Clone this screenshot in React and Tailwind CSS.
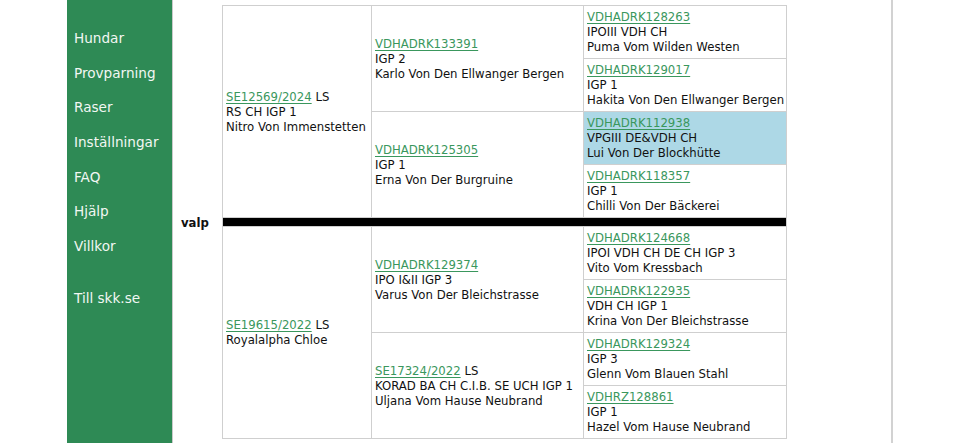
const nav = ['Hundar', 'Provparning', 'Raser', 'Inställningar', 'FAQ', 'Hjälp', 'Villkor']

const sire = {
  dog: { reg: 'SE12569/2024', extra: 'LS', title: 'RS CH IGP 1', name: 'Nitro Von Immenstetten' },
  parents: [
    {
      dog: { reg: 'VDHADRK133391', title: 'IGP 2', name: 'Karlo Von Den Ellwanger Bergen' },
      parents: [
        { reg: 'VDHADRK128263', title: 'IPOIII VDH CH', name: 'Puma Vom Wilden Westen' },
        { reg: 'VDHADRK129017', title: 'IGP 1', name: 'Hakita Von Den Ellwanger Bergen' },
      ],
    },
    {
      dog: { reg: 'VDHADRK125305', title: 'IGP 1', name: 'Erna Von Der Burgruine' },
      parents: [
        { reg: 'VDHADRK112938', title: 'VPGIII DE&VDH CH', name: 'Lui Von Der Blockhütte', hl: true },
        { reg: 'VDHADRK118357', title: 'IGP 1', name: 'Chilli Von Der Bäckerei' },
      ],
    },
  ],
}

const dam = {
  dog: { reg: 'SE19615/2022', extra: 'LS', name: 'Royalalpha Chloe' },
  parents: [
    {
      dog: { reg: 'VDHADRK129374', title: 'IPO I&II IGP 3', name: 'Varus Von Der Bleichstrasse' },
      parents: [
        { reg: 'VDHADRK124668', title: 'IPOI VDH CH DE CH IGP 3', name: 'Vito Vom Kressbach' },
        { reg: 'VDHADRK122935', title: 'VDH CH IGP 1', name: 'Krina Von Der Bleichstrasse' },
      ],
    },
    {
      dog: { reg: 'SE17324/2022', extra: 'LS', title: 'KORAD BA CH C.I.B. SE UCH IGP 1', name: 'Uljana Vom Hause Neubrand' },
      parents: [
        { reg: 'VDHADRK129324', title: 'IGP 3', name: 'Glenn Vom Blauen Stahl' },
        { reg: 'VDHRZ128861', title: 'IGP 1', name: 'Hazel Vom Hause Neubrand' },
      ],
    },
  ],
}

function Dog({ d }) {
  return (
    <>
      <a href="#" className="text-[#3a975d] underline underline-offset-2">
        {d.reg}
      </a>
      {d.extra && <span> {d.extra}</span>}
      {d.title && <div>{d.title}</div>}
      <div>{d.name}</div>
    </>
  )
}

const cell = 'border border-[#cfcfcf] pl-[3px] pr-0 pt-[4px] pb-[3px] align-middle whitespace-nowrap'

function Half({ p }) {
  const rows = []
  p.parents.forEach((par, i) => {
    par.parents.forEach((gp, j) => {
      rows.push(
        <tr key={`${i}-${j}`}>
          {i === 0 && j === 0 && (
            <td rowSpan={4} className={`${cell} w-[149px]`}>
              <Dog d={p.dog} />
            </td>
          )}
          {j === 0 && (
            <td rowSpan={2} className={`${cell} w-[212px]`}>
              <Dog d={par.dog} />
            </td>
          )}
          <td className={`${cell} w-[203px] h-[53px] ${gp.hl ? 'bg-[#add8e6]' : ''}`}>
            <Dog d={gp} />
          </td>
        </tr>
      )
    })
  })
  return rows
}

export default function App() {
  return (
    <div className="flex h-[443px] overflow-hidden bg-white text-[11.7px] leading-[15px] text-[#111]" style={{ fontFamily: '"DejaVu Sans", Verdana, sans-serif' }}>
      <div className="w-[67px] shrink-0" />
      <nav className="w-[106px] shrink-0 border-r border-[#c9c9c9] bg-[#2e8a55] pl-[7px] pt-[21px] text-[13.6px] text-[#f2f7f3]">
        {nav.map((n) => (
          <a key={n} href="#" className="flex h-[34.7px] items-center">
            {n}
          </a>
        ))}
        <div className="h-[17.3px]" />
        <a href="#" className="flex h-[34.7px] items-center">
          Till skk.se
        </a>
      </nav>
      <main className="flex w-[720px] shrink-0 items-start border-r-2 border-[#d2d2d2] pl-[8px] pt-[5px]">
        <div className="flex h-[432px] w-[41px] items-center pt-[4px] font-bold">valp</div>
        <table className="table-fixed border-collapse border border-[#cfcfcf]">
          <tbody>
            <Half p={sire} />
            <tr>
              <td colSpan={3} className="h-[9px] border border-[#cfcfcf] bg-black p-0" />
            </tr>
            <Half p={dam} />
          </tbody>
        </table>
      </main>
    </div>
  )
}
